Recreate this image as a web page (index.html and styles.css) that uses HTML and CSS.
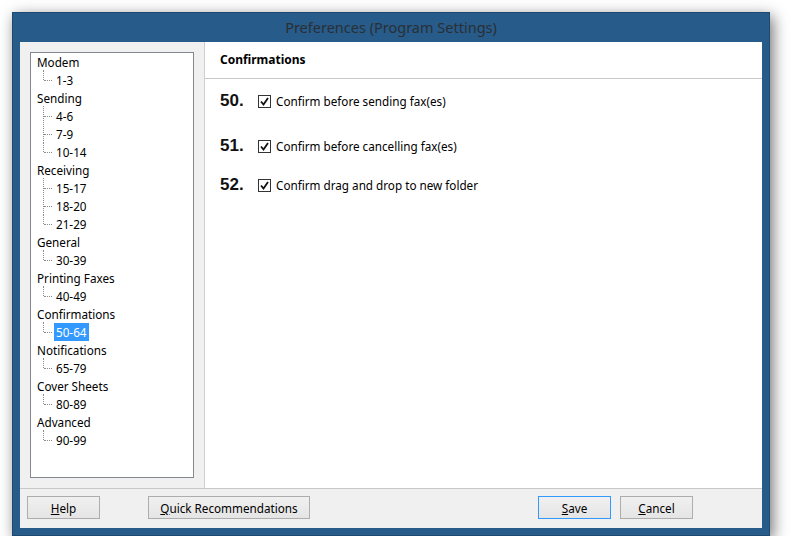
FILE: index.html
```html
<!DOCTYPE html>
<html lang="en">
<head>
  <meta charset="UTF-8">
  <title>Preferences (Program Settings)</title>
  <link rel="stylesheet" href="styles.css">
</head>
<body>
  <div class="window">
    <div class="titlebar">Preferences (Program Settings)</div>
    <div class="client">
      <div class="main">
        <div class="side">
          <ul class="tree">
            <li class="group">Modem</li>
            <li class="leaf last"><span>1-3</span></li>
            <li class="group">Sending</li>
            <li class="leaf"><span>4-6</span></li>
            <li class="leaf"><span>7-9</span></li>
            <li class="leaf last"><span>10-14</span></li>
            <li class="group">Receiving</li>
            <li class="leaf"><span>15-17</span></li>
            <li class="leaf"><span>18-20</span></li>
            <li class="leaf last"><span>21-29</span></li>
            <li class="group">General</li>
            <li class="leaf last"><span>30-39</span></li>
            <li class="group">Printing Faxes</li>
            <li class="leaf last"><span>40-49</span></li>
            <li class="group">Confirmations</li>
            <li class="leaf last"><span class="selected">50-64</span></li>
            <li class="group">Notifications</li>
            <li class="leaf last"><span>65-79</span></li>
            <li class="group">Cover Sheets</li>
            <li class="leaf last"><span>80-89</span></li>
            <li class="group">Advanced</li>
            <li class="leaf last"><span>90-99</span></li>
          </ul>
        </div>
        <div class="panel">
          <div class="panel-head">Confirmations</div>
          <div class="options">
            <div class="option">
              <span class="num">50.</span>
              <span class="check"><svg width="9" height="9" viewBox="0 0 9 9"><path d="M1 4.5 L3.5 7.5 L8 1" fill="none" stroke="#111" stroke-width="1.8"/></svg></span>
              <span class="label">Confirm before sending fax(es)</span>
            </div>
            <div class="option second">
              <span class="num">51.</span>
              <span class="check"><svg width="9" height="9" viewBox="0 0 9 9"><path d="M1 4.5 L3.5 7.5 L8 1" fill="none" stroke="#111" stroke-width="1.8"/></svg></span>
              <span class="label">Confirm before cancelling fax(es)</span>
            </div>
            <div class="option third">
              <span class="num">52.</span>
              <span class="check"><svg width="9" height="9" viewBox="0 0 9 9"><path d="M1 4.5 L3.5 7.5 L8 1" fill="none" stroke="#111" stroke-width="1.8"/></svg></span>
              <span class="label">Confirm drag and drop to new folder</span>
            </div>
          </div>
        </div>
      </div>
      <div class="footer">
        <button class="btn help"><u>H</u>elp</button>
        <button class="btn quick"><u>Q</u>uick Recommendations</button>
        <button class="btn save default"><u>S</u>ave</button>
        <button class="btn cancel"><u>C</u>ancel</button>
      </div>
    </div>
  </div>
</body>
</html>
```

FILE: styles.css
```css
*{
  margin: 0;
  padding: 0;
  box-sizing: border-box;
  list-style: none;
}
body{
  background: #fff;
  font-family: "Noto Sans", "Open Sans", sans-serif;
  font-size: 11.7px;
  color: #000;
}
.window{
  width: 758px;
  height: 524px;
  margin: 12px 0 0 12px;
  background: #275b8a;
  border: 1px solid #1d4a73;
  padding: 0 7px 7px 7px;
  display: flex;
  flex-direction: column;
  box-shadow: 3px 4px 14px rgba(0,0,0,.55);
}
.titlebar{
  height: 29px;
  line-height: 29px;
  text-align: center;
  font-size: 14.5px;
  color: #2a2f34;
}
.client{
  flex: 1;
  display: flex;
  flex-direction: column;
  background: #f0f0f0;
}
.main{
  height: 446px;
  display: flex;
}
.side{
  width: 185px;
  padding: 10px;
  border-right: 1px solid #cfcfcf;
}
.tree{
  height: 426px;
  width: 164px;
  background: #fff;
  border: 1px solid #828790;
  padding-left: 6px;
}
.tree li{
  height: 18px;
  line-height: 18px;
  white-space: nowrap;
}
.leaf{
  position: relative;
  padding-left: 17px;
}
.leaf::before{
  content: "";
  position: absolute;
  left: 6px;
  top: -1px;
  bottom: 0;
  border-left: 1px dotted #8a8a8a;
}
.leaf.last::before{
  bottom: 9px;
}
.leaf::after{
  content: "";
  position: absolute;
  left: 7px;
  top: 9px;
  width: 8px;
  border-top: 1px dotted #8a8a8a;
}
.leaf span{
  display: inline-block;
  padding: 0 2px;
}
.leaf .selected{
  background: #3399ff;
  color: #fff;
}
.panel{
  flex: 1;
  background: #fff;
}
.panel-head{
  height: 37px;
  line-height: 36px;
  padding-left: 15px;
  font-weight: bold;
  font-size: 12px;
  border-bottom: 1px solid #c8c8c8;
}
.options{
  padding: 12px 0 0 15px;
}
.option{
  display: flex;
  align-items: center;
  height: 20px;
}
.option.second{
  margin-top: 25px;
}
.option.third{
  margin-top: 19px;
}
.num{
  width: 38px;
  font-family: "Liberation Sans", Arial, sans-serif;
  font-weight: bold;
  font-size: 17px;
  color: #111;
}
.check{
  width: 13px;
  height: 13px;
  border: 1px solid #333;
  background: #fff;
  display: flex;
  align-items: center;
  justify-content: center;
  margin-right: 5px;
}
.footer{
  flex: 1;
  border-top: 1px solid #c8c8c8;
  display: flex;
  align-items: flex-start;
  padding: 7px 0 0 7px;
}
.btn{
  height: 23px;
  font-family: "Noto Sans", "Open Sans", sans-serif;
  font-size: 11.7px;
  color: #000;
  background: linear-gradient(#f0f0f0, #e5e5e5);
  border: 1px solid #adadad;
}
.help{
  width: 73px;
}
.quick{
  width: 162px;
  margin-left: 48px;
}
.save{
  width: 73px;
  margin-left: 228px;
}
.save.default{
  border-color: #3399ff;
}
.cancel{
  width: 73px;
  margin-left: 9px;
}
```
